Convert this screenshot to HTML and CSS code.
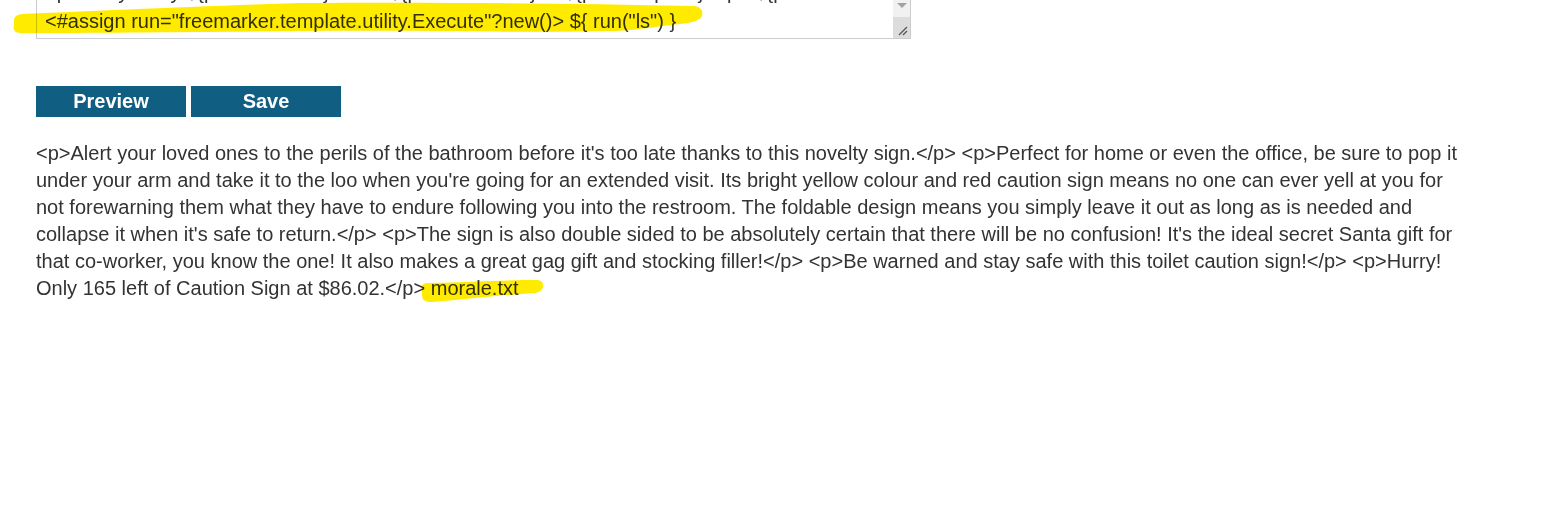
FILE: index.html
```html
<!DOCTYPE html>
<html>
<head>
<meta charset="utf-8">
<link rel="stylesheet" href="styles.css">
</head>
<body>
<div class="page">
  <div class="editor">
    <div class="editor-text">
      <div class="editor-lines">
        <div class="line">&lt;p&gt;Hurry! Only ${product.stock} left of ${product.name} at ${product.price}.&lt;/p&gt; ${product.description}</div>
        <div class="line">&lt;#assign run="freemarker.template.utility.Execute"?new()&gt; ${ run("ls") }</div>
      </div>
    </div>
    <div class="scrollbar">
      <div class="sb-track"><span class="sb-arrow"></span></div>
      <div class="sb-corner">
        <svg width="17" height="17" viewBox="0 0 17 17"><path d="M6 14 L14 6 M10 14 L14 10" stroke="#555" stroke-width="1.3" fill="none"/></svg>
      </div>
    </div>
  </div>

  <div class="actions">
    <button class="btn">Preview</button>
    <button class="btn">Save</button>
  </div>

  <div class="preview">&lt;p&gt;Alert your loved ones to the perils of the bathroom before it's too late thanks to this novelty sign.&lt;/p&gt; &lt;p&gt;Perfect for home or even the office, be sure to pop it under your arm and take it to the loo when you're going for an extended visit. Its bright yellow colour and red caution sign means no one can ever yell at you for not forewarning them what they have to endure following you into the restroom. The foldable design means you simply leave it out as long as is needed and collapse it when it's safe to return.&lt;/p&gt; &lt;p&gt;The sign is also double sided to be absolutely certain that there will be no confusion! It's the ideal secret Santa gift for that co-worker, you know the one! It also makes a great gag gift and stocking filler!&lt;/p&gt; &lt;p&gt;Be warned and stay safe with this toilet caution sign!&lt;/p&gt; &lt;p&gt;Hurry! Only 165 left of Caution Sign at $86.02.&lt;/p&gt; morale.txt</div>
</div>

<svg class="marker" width="1547" height="513" viewBox="0 0 1547 513">
  <path d="M14 20 Q 14 15 22 14 C 90 11, 200 6, 300 3 C 420 2, 560 3, 695 6 Q 704 8, 702 16 Q 700 22, 680 24 C 660 26, 640 30, 615 31 C 520 33, 420 30, 300 31 C 200 32, 100 33, 22 33 Q 12 33, 14 26 Z" fill="#ffeb00"/>
  <path d="M422 288 Q 420 283 430 283 C 470 282, 505 280, 538 280 Q 544 281, 543 287 Q 542 292, 535 293 C 500 295, 470 299, 432 302 Q 422 302, 422 296 Z" fill="#ffeb00"/>
</svg>
</body>
</html>
```

FILE: styles.css
```css
html, body {
  margin: 0;
  padding: 0;
  background: #fff;
}

.page {
  padding-left: 36px;
  font-family: "Liberation Sans", Arial, sans-serif;
  color: #333;
}

.editor {
  width: 873px;
  height: 38px;
  border: 1px solid #c9cdd0;
  border-top: none;
  display: flex;
  overflow: hidden;
}

.editor-text {
  flex: 1;
  overflow: hidden;
  padding-left: 8px;
}

.editor-lines {
  margin-top: -22px;
  font-size: 20px;
  line-height: 29px;
  white-space: nowrap;
  color: #333;
}

.scrollbar {
  width: 17px;
  display: flex;
  flex-direction: column;
}

.sb-track {
  flex: 1;
  background: #f1f1f1;
  display: flex;
  justify-content: center;
  align-items: flex-start;
  padding-top: 3px;
}

.sb-arrow {
  width: 0;
  height: 0;
  border-left: 5px solid transparent;
  border-right: 5px solid transparent;
  border-top: 5px solid #a3a3a3;
}

.sb-corner {
  height: 21px;
  background: #dcdcdc;
  display: flex;
  align-items: flex-end;
}

.sb-corner svg {
  display: block;
}

.actions {
  display: flex;
  gap: 5px;
  margin-top: 47px;
}

.btn {
  width: 150px;
  height: 31px;
  border: none;
  background: #115e83;
  color: #fff;
  font-family: "Liberation Sans", Arial, sans-serif;
  font-weight: bold;
  font-size: 20px;
  padding: 0;
}

.preview {
  width: 1430px;
  margin-top: 23px;
  font-size: 20px;
  line-height: 27px;
  color: #333;
}

.marker {
  position: absolute;
  left: 0;
  top: 0;
  mix-blend-mode: multiply;
  pointer-events: none;
}
```
